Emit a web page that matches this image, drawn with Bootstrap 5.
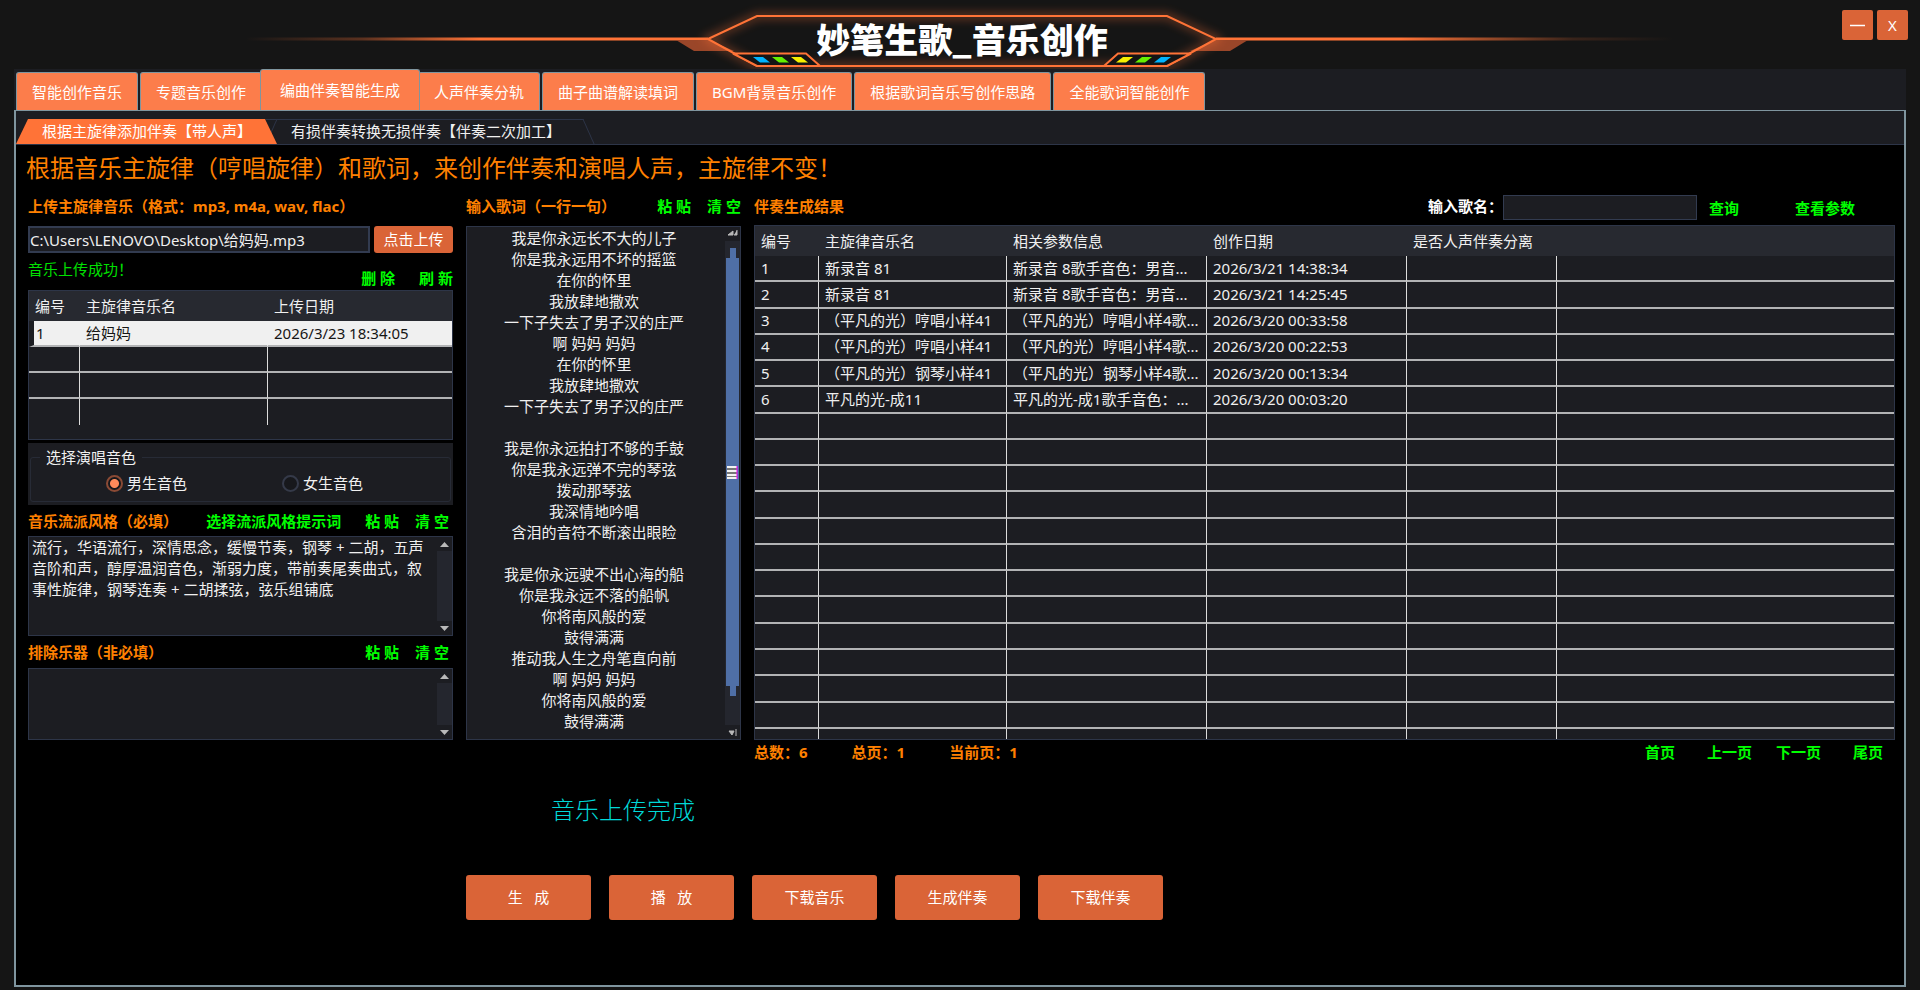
<!DOCTYPE html>
<html lang="zh-CN">
<head>
<meta charset="utf-8">
<meta name="viewport" content="width=device-width, initial-scale=1">
<title>妙笔生歌_音乐创作</title>
<link href="https://cdn.jsdelivr.net/npm/bootstrap@5.3.0/dist/css/bootstrap.min.css" rel="stylesheet">
<style>
:root{--accent:#ff7b47;--btn:#da6437;--surface:#1c1d22;--head:#272930;--edge:#2d3548;--rim:#7f959f;--amber:#ff8000;--lime:#00ff00}
body{background:#151515;color:#f0f0f0;font-family:"Noto Sans","Noto Sans CJK SC",sans-serif;font-size:15px;line-height:24px}
button,input,textarea{font:inherit}

/* title bar */
.titlebar{height:69px}
.titlebar-art{position:absolute;left:50%;top:0;width:1452px;height:69px;transform:translateX(-50%);z-index:0}
.app-title{font-size:34px;line-height:40px;font-weight:900;font-family:"Noto Sans CJK SC",sans-serif;color:#fff;padding-top:19px;z-index:1}
.win-btns{position:absolute;right:12px;top:10px;z-index:2}
.win-btn{width:31px;height:30px;background:var(--btn);border:0;border-radius:2px;color:#fff;padding:0;line-height:30px}

/* main tabs */
.workspace{background:var(--surface);margin:0 14px 0 14px}
.main-tabs{height:41px;gap:2px;padding-left:2px}
.main-tabs .tab-btn{height:38px;padding:0 15px;background:#fc7d4b;border:1px solid var(--rim);border-bottom:0;border-radius:3px 3px 0 0;color:#fff;line-height:36px;white-space:nowrap}
.main-tabs .tab-btn.active{height:41px;padding:0 19px;margin:0 -4px;position:relative;z-index:1}
.panel{border:2px solid var(--rim);border-top-width:1px;background:#000;min-height:877px}

/* inner tabs */
.sub-tabs{background:var(--surface);height:34px;padding-top:8px;border-bottom:1px solid var(--edge)}
.sub-tab{height:25px;border:0;background:none;color:#f0f0f0;position:relative;padding:0;line-height:25px;text-align:left;white-space:nowrap}
.sub-tab.active{width:261px;padding-left:26px;background:#ff7337;color:#fff;z-index:1;clip-path:polygon(12px 0,calc(100% - 12px) 0,100% 100%,0 100%)}
.sub-tab.plain{width:318px;padding-left:14px}
.sub-tab.plain::before{content:"";position:absolute;inset:0 6px 0 -6px;border-top:1px solid var(--edge);border-right:1px solid var(--edge);transform:skewX(24deg)}
.sub-tab.plain::after{content:"";position:absolute;left:-6px;top:0;width:8px;height:25px;border-left:1px solid var(--edge);transform:skewX(-24deg)}

.headline{font-size:24px;line-height:30px;color:var(--amber);margin:0;padding:8px 0 11px 10px;font-weight:400}
.work-grid{display:grid;grid-template-columns:425px 275px minmax(0,1fr);column-gap:13px;padding:0 9px 0 12px}
.cap{color:var(--amber);font-weight:700;white-space:nowrap;margin:0}
.act{color:var(--lime);font-weight:700;text-decoration:none;white-space:nowrap}
.act:hover{color:#7dff7d}
.box{border:1px solid var(--edge);background:var(--surface)}
.box textarea{flex:1 1 0;min-width:0;background:transparent;border:0;outline:0;resize:none;overflow:hidden;color:#f0f0f0;line-height:21px;padding:0 6px 0 3px}
.box textarea.text-center{padding:1px 4px 0 0}
.path-field{height:27px;border:2px solid #323b50;background:var(--surface);color:#f0f0f0;padding:0}
.btn-fire{background:var(--btn);color:#fff;border:0;border-radius:3px;padding:0;font-size:15px}
.btn-fire:hover{background:#e8754a;color:#fff}
.upload-btn{width:79px;height:27px;line-height:27px}
.ok-msg{color:#00e000}
.bar{width:15px;flex:none;background:#24262e;display:flex;flex-direction:column;justify-content:space-between}
.bar svg{display:block;width:15px;height:14px;background:var(--surface)}
.bar .thumb{height:448px;background:none;margin:7px 0 auto}

/* data grids */
.grid-table{width:100%;table-layout:fixed;border-collapse:separate;border-spacing:0;color:#f0f0f0;line-height:23px}
.grid-table th{background:var(--head);font-weight:400;height:30px;padding:0 6px;white-space:nowrap}
.grid-table td{border-bottom:2px solid #b2b3b5;border-right:1px solid #dcdcdc;padding:0 6px;white-space:nowrap;overflow:hidden}
.grid-table td:last-child{border-right:0}
.grid-table tr.tail td{border-bottom:0}
.upload-list{height:150px}
.upload-list td{height:26px}
.upload-list .picked td{background:#f0f0f0;color:#151515;border-right-color:#f0f0f0}
.upload-list .picked td:first-child{border-left:5px solid var(--surface);padding-left:2px}
.result-list{height:513px}
.result-list tr.tail td{height:10px}

/* voice picker */
.voice{height:62px;margin-top:3px;background:var(--surface);padding:4px 2px 3px}
.voice fieldset{border:1px solid #272b36;border-radius:3px;height:55px}
.voice legend{width:auto;float:none;font-size:15px;line-height:20px;margin:0 0 0 9px;padding:0 6px}
.voice-options{padding:6px 0 0 75px}
.voice label{display:flex;flex:none;align-items:center;gap:4px;width:176px;line-height:20px}
.voice input{appearance:none;width:17px;height:17px;border:2px solid #353a49;border-radius:50%;margin:0;background:#17181c}
.voice input:checked{border-color:#8a4a35;background:radial-gradient(circle,#ff8a5a 0 4px,#17181c 5px)}

.find-label{font-weight:700;color:#fff}
.find-field{width:194px;height:25px;border:1px solid #323b50;background:var(--surface);color:#f0f0f0;padding:0 4px}
.totals{gap:44px}
.status-msg{font-size:24px;line-height:30px;font-weight:300;color:#00d8d8;margin:31px 0 0 535px}
.actions{gap:18px;padding-left:450px;margin-top:50px}
.actions .btn-fire{width:125px;height:45px}
</style>
</head>
<body>
<header class="titlebar position-relative ps-1">
  <div class="position-relative text-center">
    <svg class="titlebar-art" viewBox="236 0 1452 69" aria-hidden="true">
      <defs>
        <linearGradient id="fadeL" gradientUnits="userSpaceOnUse" x1="245" y1="0" x2="480" y2="0"><stop offset="0" stop-color="#ff7337" stop-opacity="0"/><stop offset=".5" stop-color="#ff7337" stop-opacity=".3"/><stop offset="1" stop-color="#ff7337"/></linearGradient>
        <linearGradient id="fadeR" gradientUnits="userSpaceOnUse" x1="1400" y1="0" x2="1688" y2="0"><stop offset="0" stop-color="#ff7337"/><stop offset=".35" stop-color="#ff7337" stop-opacity=".5"/><stop offset=".6" stop-color="#ff7337" stop-opacity=".15"/><stop offset=".95" stop-color="#ff7337" stop-opacity="0"/></linearGradient>
        <filter id="glow" x="-10%" y="-50%" width="120%" height="200%"><feGaussianBlur stdDeviation="5"/></filter>
      </defs>
      <path d="M236 37.500H708V40.500H236Z" fill="url(#fadeL)"/>
      <path d="M1216 37.500H1688V40.500H1216Z" fill="url(#fadeR)"/>
      <path id="wing" d="M676 40H709L734 51H694Z" fill="#9a4629"/>
      <use href="#wing" transform="translate(1924 0) scale(-1 1)"/>
      <path d="M707 39L757 16H1167L1217 39L1167 66H757Z" fill="none" stroke="#ff7337" stroke-width="6" opacity=".4" filter="url(#glow)"/>
      <path d="M708 39L757 16H1167L1216 39L1167 66H757Z" fill="none" stroke="#ff7337" stroke-width="2"/>
      <g id="corner">
        <path d="M733 53.500H806L820 66H757Z" fill="#151515" stroke="#ff7337" stroke-width="2"/>
        <path d="M753 57H763L770 62.500H760Z" fill="#00b4ff"/>
        <path d="M772 57H782L789 62.500H779Z" fill="#66f000"/>
        <path d="M791 57H801L808 62.500H798Z" fill="#f6f000"/>
      </g>
      <use href="#corner" transform="translate(1924 0) scale(-1 1)"/>
    </svg>
    <h1 class="app-title position-relative mb-0">妙笔生歌_音乐创作</h1>
  </div>
  <div class="win-btns d-flex gap-1">
    <button class="win-btn" type="button" aria-label="最小化"><svg width="15" height="3" viewBox="0 0 15 3" class="d-block mx-auto"><path d="M0 1.500H15" stroke="#fff" stroke-width="1.500"/></svg></button>
    <button class="win-btn" type="button">X</button>
  </div>
</header>

<main class="workspace">
  <nav class="main-tabs d-flex align-items-end">
    <button class="tab-btn" type="button">智能创作音乐</button>
    <button class="tab-btn" type="button">专题音乐创作</button>
    <button class="tab-btn active" type="button">编曲伴奏智能生成</button>
    <button class="tab-btn" type="button">人声伴奏分轨</button>
    <button class="tab-btn" type="button">曲子曲谱解读填词</button>
    <button class="tab-btn" type="button">BGM背景音乐创作</button>
    <button class="tab-btn" type="button">根据歌词音乐写创作思路</button>
    <button class="tab-btn" type="button">全能歌词智能创作</button>
  </nav>

  <section class="panel">
    <div class="sub-tabs d-flex">
      <button class="sub-tab active" type="button">根据主旋律添加伴奏【带人声】</button>
      <button class="sub-tab plain" type="button">有损伴奏转换无损伴奏【伴奏二次加工】</button>
    </div>
    <h2 class="headline">根据音乐主旋律（哼唱旋律）和歌词，来创作伴奏和演唱人声，主旋律不变！</h2>

    <div class="work-grid">
      <!-- source melody and style -->
      <div class="d-flex flex-column">
        <label class="cap mb-2" for="path">上传主旋律音乐（格式：mp3, m4a, wav, flac）</label>
        <div class="d-flex gap-1">
          <input class="path-field flex-fill" id="path" type="text" value="C:\Users\LENOVO\Desktop\给妈妈.mp3">
          <button class="btn btn-fire upload-btn" type="button">点击上传</button>
        </div>
        <div class="d-flex justify-content-between pt-1" style="height:37px">
          <span class="ok-msg">音乐上传成功！</span>
          <span class="d-flex gap-4 align-items-end"><a class="act" href="#">删 除</a><a class="act" href="#">刷 新</a></span>
        </div>
        <div class="box upload-list">
          <table class="grid-table">
            <colgroup><col style="width:51px"><col style="width:188px"><col></colgroup>
            <thead><tr><th>编号</th><th>主旋律音乐名</th><th>上传日期</th></tr></thead>
            <tbody>
              <tr class="picked"><td>1</td><td>给妈妈</td><td>2026/3/23 18:34:05</td></tr>
              <tr><td></td><td></td><td></td></tr>
              <tr><td></td><td></td><td></td></tr>
              <tr class="tail"><td></td><td></td><td></td></tr>
            </tbody>
          </table>
        </div>
        <div class="voice">
          <fieldset>
            <legend>选择演唱音色</legend>
            <div class="voice-options d-flex">
              <label><input type="radio" name="voice" checked>男生音色</label>
              <label><input type="radio" name="voice">女生音色</label>
            </div>
          </fieldset>
        </div>
        <div class="d-flex align-items-center" style="height:31px">
          <label class="cap me-auto" for="style">音乐流派风格（必填）</label>
          <a class="act me-4" href="#">选择流派风格提示词</a>
          <a class="act me-3" href="#">粘 贴</a>
          <a class="act pe-1" href="#">清 空</a>
        </div>
        <div class="box d-flex" style="height:100px">
          <textarea id="style">流行，华语流行，深情思念，缓慢节奏，钢琴 + 二胡，五声音阶和声，醇厚温润音色，渐弱力度，带前奏尾奏曲式，叙事性旋律，钢琴连奏 + 二胡揉弦，弦乐组铺底</textarea>
          <div class="bar"><svg viewBox="0 0 15 14"><path d="M3 10L7.500 5L12 10Z" fill="#b9b9b9"/></svg><svg viewBox="0 0 15 14"><path d="M3 5L7.500 10L12 5Z" fill="#b9b9b9"/></svg></div>
        </div>
        <div class="d-flex align-items-center" style="height:32px">
          <label class="cap me-auto" for="exclude">排除乐器（非必填）</label>
          <a class="act me-3" href="#">粘 贴</a>
          <a class="act pe-1" href="#">清 空</a>
        </div>
        <div class="box d-flex" style="height:72px">
          <textarea id="exclude"></textarea>
          <div class="bar"><svg viewBox="0 0 15 14"><path d="M3 10L7.500 5L12 10Z" fill="#b9b9b9"/></svg><svg viewBox="0 0 15 14"><path d="M3 5L7.500 10L12 5Z" fill="#b9b9b9"/></svg></div>
        </div>
      </div>

      <!-- lyrics -->
      <div class="d-flex flex-column">
        <div class="d-flex mb-2">
          <label class="cap me-auto" for="lyrics">输入歌词（一行一句）</label>
          <a class="act me-3" href="#">粘 贴</a>
          <a class="act" href="#">清 空</a>
        </div>
        <div class="box d-flex flex-fill">
          <textarea id="lyrics" class="text-center">我是你永远长不大的儿子
你是我永远用不坏的摇篮
在你的怀里
我放肆地撒欢
一下子失去了男子汉的庄严
啊 妈妈 妈妈
在你的怀里
我放肆地撒欢
一下子失去了男子汉的庄严

我是你永远拍打不够的手鼓
你是我永远弹不完的琴弦
拨动那琴弦
我深情地吟唱
含泪的音符不断滚出眼睑

我是你永远驶不出心海的船
你是我永远不落的船帆
你将南风般的爱
鼓得满满
推动我人生之舟笔直向前
啊 妈妈 妈妈
你将南风般的爱
鼓得满满</textarea>
          <div class="bar">
            <svg viewBox="0 0 15 14"><path d="M3 8L8 4V8ZM9 8H12V3" fill="#b9b9b9" stroke="#b9b9b9"/></svg>
            <svg class="thumb" viewBox="0 0 15 448"><path d="M5 0H11V10H14V438H11V448H5V438H1V10H5Z" fill="#4f6fa6"/><path d="M2 218H12V231H2Z" fill="#777"/><path d="M2 219H12M2 223H12M2 227H12M2 230H12" stroke="#f2f2f2" stroke-width="2"/><path d="M12 218V231" stroke="#f0f"/></svg>
            <svg viewBox="0 0 15 14"><path d="M4 6H9L7 10ZM11 4V11" fill="#b9b9b9" stroke="#b9b9b9"/></svg>
          </div>
        </div>
      </div>

      <!-- results -->
      <div>
        <div class="d-flex align-items-center pb-1" style="height:31px">
          <span class="cap me-auto pb-1">伴奏生成结果</span>
          <label class="find-label pb-1" for="find">输入歌名：</label>
          <input class="find-field" id="find" type="text">
          <a class="act ms-2 ps-1" href="#">查询</a>
          <a class="act ms-5 ps-2 me-4 pe-3" href="#">查看参数</a>
        </div>
        <div class="box">
          <table class="grid-table result-list">
            <colgroup><col style="width:64px"><col style="width:188px"><col style="width:200px"><col style="width:200px"><col style="width:150px"><col></colgroup>
            <thead><tr><th>编号</th><th>主旋律音乐名</th><th>相关参数信息</th><th>创作日期</th><th>是否人声伴奏分离</th><th></th></tr></thead>
            <tbody>
              <tr><td>1</td><td>新录音 81</td><td>新录音 8歌手音色：男音...</td><td>2026/3/21 14:38:34</td><td></td><td></td></tr>
              <tr><td>2</td><td>新录音 81</td><td>新录音 8歌手音色：男音...</td><td>2026/3/21 14:25:45</td><td></td><td></td></tr>
              <tr><td>3</td><td>（平凡的光）哼唱小样41</td><td>（平凡的光）哼唱小样4歌...</td><td>2026/3/20 00:33:58</td><td></td><td></td></tr>
              <tr><td>4</td><td>（平凡的光）哼唱小样41</td><td>（平凡的光）哼唱小样4歌...</td><td>2026/3/20 00:22:53</td><td></td><td></td></tr>
              <tr><td>5</td><td>（平凡的光）钢琴小样41</td><td>（平凡的光）钢琴小样4歌...</td><td>2026/3/20 00:13:34</td><td></td><td></td></tr>
              <tr><td>6</td><td>平凡的光-成11</td><td>平凡的光-成1歌手音色：...</td><td>2026/3/20 00:03:20</td><td></td><td></td></tr>
              <tr><td>&nbsp;</td><td></td><td></td><td></td><td></td><td></td></tr>
              <tr><td>&nbsp;</td><td></td><td></td><td></td><td></td><td></td></tr>
              <tr><td>&nbsp;</td><td></td><td></td><td></td><td></td><td></td></tr>
              <tr><td>&nbsp;</td><td></td><td></td><td></td><td></td><td></td></tr>
              <tr><td>&nbsp;</td><td></td><td></td><td></td><td></td><td></td></tr>
              <tr><td>&nbsp;</td><td></td><td></td><td></td><td></td><td></td></tr>
              <tr><td>&nbsp;</td><td></td><td></td><td></td><td></td><td></td></tr>
              <tr><td>&nbsp;</td><td></td><td></td><td></td><td></td><td></td></tr>
              <tr><td>&nbsp;</td><td></td><td></td><td></td><td></td><td></td></tr>
              <tr><td>&nbsp;</td><td></td><td></td><td></td><td></td><td></td></tr>
              <tr><td>&nbsp;</td><td></td><td></td><td></td><td></td><td></td></tr>
              <tr><td>&nbsp;</td><td></td><td></td><td></td><td></td><td></td></tr>
              <tr class="tail"><td></td><td></td><td></td><td></td><td></td><td></td></tr>
            </tbody>
          </table>
        </div>
      </div>

      <div style="grid-column:3" class="d-flex justify-content-between pe-2">
        <div class="totals d-flex">
          <span class="cap">总数：6</span>
          <span class="cap">总页：1</span>
          <span class="cap">当前页：1</span>
        </div>
        <nav class="d-flex">
          <a class="act me-4 pe-2" href="#">首页</a>
          <a class="act me-4" href="#">上一页</a>
          <a class="act me-4 pe-2" href="#">下一页</a>
          <a class="act pe-1" href="#">尾页</a>
        </nav>
      </div>
    </div>

    <p class="status-msg" role="status">音乐上传完成</p>
    <div class="actions d-flex">
      <button class="btn btn-fire" type="button">生&ensp; 成</button>
      <button class="btn btn-fire" type="button">播&ensp; 放</button>
      <button class="btn btn-fire" type="button">下载音乐</button>
      <button class="btn btn-fire" type="button">生成伴奏</button>
      <button class="btn btn-fire" type="button">下载伴奏</button>
    </div>
  </section>
</main>
<script src="https://cdn.jsdelivr.net/npm/bootstrap@5.3.0/dist/js/bootstrap.bundle.min.js"></script>
</body>
</html>
